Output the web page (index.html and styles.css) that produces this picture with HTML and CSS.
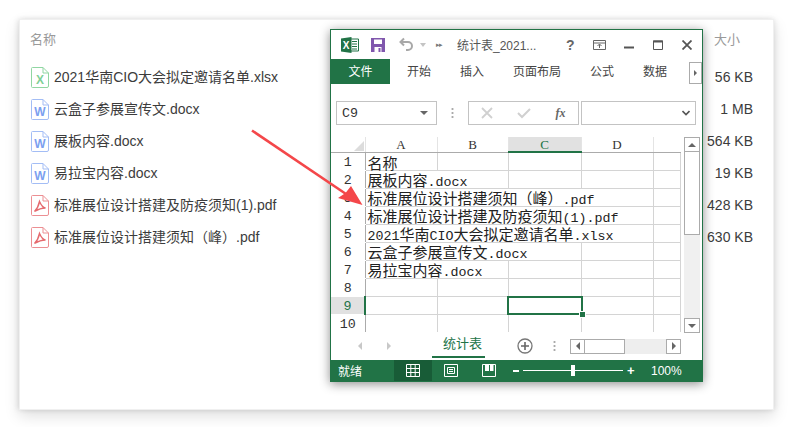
FILE: index.html
```html
<!DOCTYPE html>
<html lang="zh-CN">
<head>
<meta charset="utf-8">
<title>统计表</title>
<link rel="stylesheet" href="styles.css">
</head>
<body>
<main class="panel">
  <div class="row head"><span>名称</span><span class="size-head">大小</span></div>
  <div class="row">
    <span class="name"><svg class="file" viewBox="0 0 18 21"><path class="sheet green" d="M1.500 .5H12L17.500 6V19a1.500 1.500 0 0 1-1.500 1.500H1.500A1 1 0 0 1 .5 19.500V1.500a1 1 0 0 1 1-1Z M12 .5V6H17.500"/><text x="9" y="17" class="mark gfill">X</text></svg>2021华南CIO大会拟定邀请名单.xlsx</span><span class="size">56 KB</span>
  </div>
  <div class="row">
    <span class="name"><svg class="file" viewBox="0 0 18 21"><path class="sheet blue" d="M1.500 .5H12L17.500 6V19a1.500 1.500 0 0 1-1.500 1.500H1.500A1 1 0 0 1 .5 19.500V1.500a1 1 0 0 1 1-1Z M12 .5V6H17.500"/><text x="9" y="17" class="mark bfill">W</text></svg>云盒子参展宣传文.docx</span><span class="size">1 MB</span>
  </div>
  <div class="row">
    <span class="name"><svg class="file" viewBox="0 0 18 21"><path class="sheet blue" d="M1.500 .5H12L17.500 6V19a1.500 1.500 0 0 1-1.500 1.500H1.500A1 1 0 0 1 .5 19.500V1.500a1 1 0 0 1 1-1Z M12 .5V6H17.500"/><text x="9" y="17" class="mark bfill">W</text></svg>展板内容.docx</span><span class="size">564 KB</span>
  </div>
  <div class="row">
    <span class="name"><svg class="file" viewBox="0 0 18 21"><path class="sheet blue" d="M1.500 .5H12L17.500 6V19a1.500 1.500 0 0 1-1.500 1.500H1.500A1 1 0 0 1 .5 19.500V1.500a1 1 0 0 1 1-1Z M12 .5V6H17.500"/><text x="9" y="17" class="mark bfill">W</text></svg>易拉宝内容.docx</span><span class="size">19 KB</span>
  </div>
  <div class="row">
    <span class="name"><svg class="file" viewBox="0 0 18 21"><path class="sheet red" d="M1.500 .5H12L17.500 6V19a1.500 1.500 0 0 1-1.500 1.500H1.500A1 1 0 0 1 .5 19.500V1.500a1 1 0 0 1 1-1Z M12 .5V6H17.500"/><path class="swirl" d="M8.500 6.500C8 9 7 13 3.500 16.500 6 15 10 13 14.500 13 12 12.500 10 10 8.500 6.500Z"/></svg>标准展位设计搭建及防疫须知(1).pdf</span><span class="size">428 KB</span>
  </div>
  <div class="row">
    <span class="name"><svg class="file" viewBox="0 0 18 21"><path class="sheet red" d="M1.500 .5H12L17.500 6V19a1.500 1.500 0 0 1-1.500 1.500H1.500A1 1 0 0 1 .5 19.500V1.500a1 1 0 0 1 1-1Z M12 .5V6H17.500"/><path class="swirl" d="M8.500 6.500C8 9 7 13 3.500 16.500 6 15 10 13 14.500 13 12 12.500 10 10 8.500 6.500Z"/></svg>标准展位设计搭建须知（峰）.pdf</span><span class="size">630 KB</span>
  </div>
</main>

<section class="window">
  <header class="titlebar">
    <svg class="xl" viewBox="0 0 18 16"><path d="M9 2h8.500v12H9z" fill="#fff" stroke="#217346"/><path d="M11 4.500h5M11 7h5M11 9.500h5M11 12h5" stroke="#217346"/><path d="M0 1.500 10.500 0v16L0 14.500z" fill="#217346"/><text x="5.200" y="11.500" class="xl-x">X</text></svg>
    <svg class="save" viewBox="0 0 14 14"><path d="M0 0h14v14H0z" fill="#8057ad"/><path d="M3 1.500h8v4.500H3z" fill="#fff"/><path d="M3.500 9h7v5h-7z" fill="#fff"/><path d="M7.500 10h2v4h-2z" fill="#8057ad"/></svg>
    <svg class="undo" viewBox="0 0 15 15"><path d="M5 1.500 1.500 5 5 8.500M2 5h7a4 4 0 0 1 4 4v0a4 4 0 0 1-4 4H7" fill="none" stroke="#a8a8a8" stroke-width="2"/></svg>
    <i class="tri-down"></i>
    <span class="more">▸▸</span>
    <span class="doc">统计表_2021...</span>
    <span class="help">?</span>
    <svg class="ctl ctl-ribbon" viewBox="0 0 13 10"><path d="M.5.500h12v9H.5zM1 3h11M6.500 8V4.500M4.500 6l2-2 2 2" fill="none" stroke="#666"/></svg>
    <svg class="ctl ctl-min" viewBox="0 0 10 10"><path d="M0 7.500h10" stroke="#555" stroke-width="2"/></svg>
    <svg class="ctl ctl-max" viewBox="0 0 10 10"><path d="M.5 1h9v8.500h-9z" fill="none" stroke="#555"/><path d="M0 1.500h10" stroke="#555" stroke-width="2"/></svg>
    <svg class="ctl ctl-close" viewBox="0 0 10 10"><path d="m.5.500 9 9M9.500.500l-9 9" stroke="#555" stroke-width="1.800"/></svg>
  </header>

  <nav class="tabs">
    <span class="tab file-tab">文件</span>
    <span class="tab">开始</span>
    <span class="tab">插入</span>
    <span class="tab">页面布局</span>
    <span class="tab">公式</span>
    <span class="tab">数据</span>
    <span class="tab-next"><i class="tri-right"></i></span>
  </nav>

  <div class="formula">
    <div class="box namebox"><span>C9</span><i class="tri-down dark"></i></div>
    <span class="vdots"></span>
    <div class="box fxbox">
      <svg class="fxicon" viewBox="0 0 12 12"><path d="m1 1 10 10M11 1 1 11" stroke="#d0d0d0" stroke-width="1.800"/></svg>
      <svg class="fxicon" viewBox="0 0 14 12"><path d="m1 6 4 4 8-8" fill="none" stroke="#d0d0d0" stroke-width="2"/></svg>
      <span class="fx">fx</span>
    </div>
    <div class="box valuebox"><svg class="chev" viewBox="0 0 8 6"><path d="m.5 1 3.500 3.500L7.500 1" fill="none" stroke="#555" stroke-width="1.600"/></svg></div>
  </div>

  <div class="sheet-area">
    <table class="grid">
      <colgroup><col class="c0"><col class="c1"><col class="c2"><col class="c3"><col class="c4"><col class="c5"></colgroup>
      <tr class="cols"><th class="corner"><i></i></th><th>A</th><th>B</th><th class="on">C</th><th>D</th><th></th></tr>
      <tr><th>1</th><td>名称</td><td></td><td></td><td></td><td></td></tr>
      <tr><th>2</th><td colspan="2">展板内容<b>.docx</b></td><td></td><td></td><td></td></tr>
      <tr><th>3</th><td colspan="4">标准展位设计搭建须知（峰）<b>.pdf</b></td><td></td></tr>
      <tr><th>4</th><td colspan="4">标准展位设计搭建及防疫须知<b>(1).pdf</b></td><td></td></tr>
      <tr><th>5</th><td colspan="4"><b>2021</b>华南<b>CIO</b>大会拟定邀请名单<b>.xlsx</b></td><td></td></tr>
      <tr><th>6</th><td colspan="3">云盒子参展宣传文<b>.docx</b></td><td></td><td></td></tr>
      <tr><th>7</th><td colspan="2">易拉宝内容<b>.docx</b></td><td></td><td></td><td></td></tr>
      <tr><th>8</th><td></td><td></td><td></td><td></td><td></td></tr>
      <tr><th class="on-row">9</th><td></td><td></td><td class="selected"></td><td></td><td></td></tr>
      <tr><th>10</th><td></td><td></td><td></td><td></td><td></td></tr>
    </table>
    <div class="vscroll">
      <span class="sbtn"><i class="tri-up"></i></span>
      <span class="thumb"></span>
      <span class="track"></span>
      <span class="sbtn"><i class="tri-down dark"></i></span>
    </div>
  </div>

  <div class="sheetbar">
    <i class="tri-left pale nav-a"></i>
    <i class="tri-right pale nav-b"></i>
    <span class="sheet-tab">统计表</span>
    <svg class="plus" viewBox="0 0 16 16"><circle cx="8" cy="8" r="7" fill="none" stroke="#777" stroke-width="1.300"/><path d="M8 4v8M4 8h8" stroke="#666" stroke-width="1.600"/></svg>
    <span class="vdots small"></span>
    <div class="hscroll">
      <span class="hbtn"><i class="tri-left"></i></span>
      <span class="hthumb"></span>
      <span class="htrack"></span>
      <span class="hbtn"><i class="tri-right"></i></span>
    </div>
  </div>

  <footer class="status">
    <span class="ready">就绪</span>
    <span class="view active"><svg viewBox="0 0 14 13"><path d="M.5.500h13v12H.5zM.5 4.500h13M.5 8.500h13M4.800.500v12M9.200.500v12" fill="none" stroke="#fff"/></svg></span>
    <span class="view"><svg viewBox="0 0 14 13"><path d="M.5.500h13v12H.5zM3.500 3.500h7v6h-7zM5 5.500h4M5 7.500h4" fill="none" stroke="#fff"/></svg></span>
    <span class="view"><svg viewBox="0 0 14 13"><path d="M.5.500h13v12H.5z" fill="none" stroke="#fff"/><path d="M3 0h4v7H3zM8 0h3.500v7H8z" fill="#fff"/></svg></span>
    <div class="zoomer"><i class="minus"></i><span class="slide"><i class="knob"></i></span><span class="add">+</span></div>
    <span class="pct">100%</span>
  </footer>
</section>

<svg class="arrow" viewBox="0 0 791 427">
  <path d="M252 130.500 346 194" stroke="#f4474a" stroke-width="2.600" fill="none"/>
  <path d="M362.500 205 338 198 345.500 193 351 186Z" fill="#f4474a"/>
</svg>
</body>
</html>
```
FILE: styles.css
```css
* { box-sizing: border-box; }
html, body { margin: 0; padding: 0; background: #fff; }
body {
  width: 791px;
  height: 427px;
  overflow: hidden;
  position: relative;
  font-family: "Liberation Sans", "Noto Sans CJK SC", sans-serif;
  padding: 19px 17px 17px 19px;
}
i { display: block; font-style: normal; }

/* file list */
.panel {
  height: 391px;
  background: #fff;
  border: 1px solid #f0f0f0;
  box-shadow: 0 6px 14px rgba(0,0,0,.13), -2px 0 5px rgba(0,0,0,.08), 2px 0 5px rgba(0,0,0,.06);
  padding: 0 20px 0 10px;
}
.row {
  height: 32px;
  display: flex;
  justify-content: space-between;
  align-items: center;
  font-size: 14px;
  color: #3c3c3c;
}
.row.head { height: 36px; margin-bottom: 4px; color: #9a9a9a; font-size: 13px; }
.size-head { margin-right: 13px; }
.size { position: relative; top: 1px; }
.name { display: flex; align-items: center; gap: 5px; margin-left: 1px; white-space: nowrap; }
.file { width: 18px; height: 21px; flex: none; position: relative; top: 1px; }
.sheet { fill: #fff; stroke-width: 1; }
.green { stroke: #90d6a2; }
.blue { stroke: #a3bdf5; }
.red { stroke: #ec8f93; }
.mark { font: bold 12px "Liberation Sans", sans-serif; text-anchor: middle; }
.gfill { fill: #7fd097; }
.bfill { fill: #7ba0f0; }
.swirl { fill: none; stroke: #e56a6e; stroke-width: 1.400; }

/* excel window */
.window {
  position: absolute;
  left: 330px;
  top: 29px;
  width: 373px;
  height: 353px;
  background: #fff;
  border: 1px solid #217346;
  box-shadow: 0 2px 10px rgba(0,0,0,.45);
  display: flex;
  flex-direction: column;
  font-size: 12px;
  color: #444;
}
.titlebar { height: 29px; display: flex; align-items: center; flex: none; position: relative; }
.xl { width: 18px; height: 16px; margin-left: 10px; }
.xl-x { font: bold 10px "Liberation Sans", sans-serif; fill: #fff; text-anchor: middle; }
.save { width: 14px; height: 14px; margin-left: 12px; }
.undo { width: 15px; height: 15px; margin-left: 14px; }
.tri-down { width: 0; height: 0; border: 3px solid transparent; border-top: 4px solid #c4c4c4; border-bottom: 0; margin-left: 6px; }
.tri-down.dark { border-top-color: #666; border-width: 4px 4px 0; }
.tri-up { width: 0; height: 0; border: solid transparent; border-width: 0 4px 4px; border-bottom-color: #666; }
.tri-right { width: 0; height: 0; border: solid transparent; border-width: 4px 0 4px 4px; border-left-color: #666; }
.tri-left { width: 0; height: 0; border: solid transparent; border-width: 4px 4px 4px 0; border-right-color: #666; }
.tri-right.pale { border-left-color: #c8c8c8; }
.tri-left.pale { border-right-color: #c8c8c8; }
.more { font-size: 7px; letter-spacing: -1px; color: #777; margin-left: 10px; width: 10px; }
.doc { margin-left: 11px; width: 109px; color: #555; white-space: nowrap; }
.help { font: bold 14px "Liberation Sans", sans-serif; color: #666; width: 13px; }
.ctl { flex: none; }
.ctl-ribbon { width: 13px; height: 10px; margin-left: 14px; }
.ctl-min { width: 10px; height: 10px; margin-left: 18px; }
.ctl-max { width: 10px; height: 10px; margin-left: 19px; }
.ctl-close { width: 10px; height: 10px; margin-left: 19px; }

.tabs { height: 25px; display: flex; align-items: center; flex: none; gap: 29px; position: relative; line-height: 22px; }
.tab { white-space: nowrap; color: #444; }
.file-tab {
  width: 59px;
  height: 25px;
  background: #217346;
  color: #fff;
  display: flex;
  align-items: center;
  justify-content: center;
  margin-right: -12px;
}
.tab-next {
  position: absolute;
  right: 0;
  top: 3px;
  width: 13px;
  height: 22px;
  border: 1px solid #ababab;
  display: flex;
  align-items: center;
  justify-content: center;
}
.tab-next .tri-right { border-width: 3px 0 3px 3px; }

.formula { display: flex; align-items: center; height: 24px; margin: 17px 6px 12px 5px; flex: none; }
.box { height: 24px; border: 1px solid #c3c3c3; display: flex; align-items: center; }
.namebox { width: 102px; justify-content: space-between; padding: 0 8px 0 5px; font: 13.330px "Liberation Mono", monospace; color: #333; }
.namebox .tri-down { margin: 0; }
.vdots { width: 3px; height: 12px; margin: 0 14px 0 14px; background: radial-gradient(circle, #aaa 1px, transparent 1.200px) 0 0 / 3px 4px; flex: none; }
.fxbox { width: 111px; padding-left: 12px; gap: 24px; }
.fxicon { width: 12px; height: 12px; flex: none; }
.fxicon + .fxicon { width: 14px; }
.fx { font: italic bold 12px "Liberation Serif", serif; color: #666; }
.valuebox { width: 116px; margin-left: 2px; justify-content: flex-end; padding-right: 5px; }
.chev { width: 8px; height: 6px; }

.sheet-area { display: flex; flex: none; height: 196px; overflow: hidden; }
.grid {
  border-collapse: collapse;
  table-layout: fixed;
  width: 349px;
  align-self: flex-start;
  font: 15px/10px "Noto Sans CJK SC", sans-serif;
  color: #222;
}
.c0 { width: 34px; } .c1 { width: 72px; } .c2 { width: 71px; } .c3 { width: 73px; } .c4 { width: 72px; } .c5 { width: 27px; }
.grid tr { height: 18px; }
.grid tr.cols { height: 15px; }
.grid td {
  border: 1px solid #d4d4d4;
  padding: 4px 0 0 2px;
  white-space: nowrap;
  overflow: visible;
  line-height: 10px;
  height: 18px;
}
.grid td b { font: 13.330px/8px "Liberation Mono", monospace; }
.grid th {
  font: 13.330px/10px "Liberation Mono", monospace;
  font-weight: normal;
  color: #333;
  padding: 4px 0 0;
  text-align: center;
}
.cols th { border-right: 1px solid #e4e4e4; border-bottom: 1px solid #ababab; font-family: "Liberation Serif", serif; font-size: 13px; line-height: 13px; padding-top: 1px; }
tr:not(.cols) th { border-right: 1px solid #ababab; border-bottom: 1px solid #fff; }
.grid tr:first-child th:last-child { border-right: 0; }
.corner i { width: 0; height: 0; border: solid transparent; border-width: 0 0 10px 10px; border-bottom-color: #dcdcdc; margin: 2px 1px 0 auto; }
.cols th.on { background: #e1e1e1; color: #217346; border-bottom: 2px solid #217346; }
tr th.on-row { background: #e1e1e1; color: #217346; border-right: 2px solid #217346; }
.grid td.selected { position: relative; }
.selected::after {
  content: "";
  position: absolute;
  left: -2px;
  top: -1px;
  right: -2px;
  bottom: -1px;
  border: 2px solid #217346;
}
.selected::before {
  content: "";
  position: absolute;
  right: -4px;
  bottom: -3px;
  width: 5px;
  height: 5px;
  background: #217346;
  z-index: 1;
  box-shadow: 0 0 0 1px #fff;
}
.grid tr:last-child td { border-bottom: 0; }
.vscroll { margin-left: 3px; width: 16px; display: flex; flex-direction: column; }
.sbtn { height: 15px; border: 1px solid #ababab; display: flex; align-items: center; justify-content: center; flex: none; }
.sbtn .tri-down { margin: 0; }
.thumb { height: 83px; border: 1px solid #ababab; border-top: 0; background: #fff; flex: none; }
.track { flex: 1; background: #f0f0f0; }

.sheetbar { height: 26px; display: flex; align-items: center; flex: none; position: relative; }
.nav-a { margin-left: 27px; }
.nav-b { margin-left: 25px; }
.sheet-tab {
  margin-left: 41px;
  width: 53px;
  height: 25px;
  border-bottom: 2px solid #217346;
  color: #217346;
  padding-left: 11px;
  line-height: 21px;
  font-size: 13px;
  white-space: nowrap;
  overflow: hidden;
  align-self: flex-start;
}
.plus { width: 16px; height: 16px; margin-left: 32px; }
.vdots.small { margin: 0 14px 0 20px; }
.hscroll { display: flex; width: 111px; height: 15px; }
.hbtn { width: 15px; border: 1px solid #ababab; display: flex; align-items: center; justify-content: center; flex: none; }
.hthumb { width: 40px; border: 1px solid #ababab; border-left: 0; background: #fff; flex: none; }
.htrack { flex: 1; background: #eee; }

.status { flex: 1; background: #217346; display: flex; align-items: center; color: #fff; margin-top: 1px; }
.ready { margin-left: 7px; width: 56px; }
.view { width: 38px; height: 100%; display: flex; align-items: center; justify-content: center; }
.view.active { background: #185c37; }
.view svg { width: 14px; height: 13px; }
.zoomer { display: flex; align-items: center; margin-left: 2px; width: 130px; }
.minus { width: 6px; height: 2px; background: #fff; margin-left: 3px; }
.slide { width: 100px; height: 1px; background: #fff; margin-left: 4px; position: relative; }
.knob { position: absolute; left: 48px; top: -5px; width: 4px; height: 11px; background: #fff; }
.add { font: bold 13px "Liberation Sans", sans-serif; margin-left: 4px; }
.pct { margin-left: 11px; font-size: 12px; }

.arrow { position: absolute; left: 0; top: 0; width: 791px; height: 427px; pointer-events: none; }
```
